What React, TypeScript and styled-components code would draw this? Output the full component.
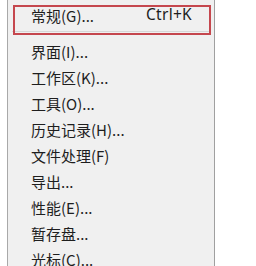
import React from "react";
import styled, { createGlobalStyle } from "styled-components";

const Global = createGlobalStyle`
  html, body { margin: 0; padding: 0; background: #ffffff; }
  body { font-family: "Noto Sans CJK SC", "Noto Sans", sans-serif; }
`;

const Page = styled.div`
  width: 256px;
  height: 266px;
  overflow: hidden;
  position: relative;
  background: #ffffff;
`;

const Menu = styled.div`
  position: relative;
  margin-left: 7px;
  width: 208px;
  height: 266px;
  box-sizing: border-box;
  background: #f0f0f0;
  border-left: 1px solid #a9a9a9;
  border-right: 1px solid #a0a0a0;
  padding-top: 2px;
  display: flex;
  flex-direction: column;
  overflow: hidden;
`;

const Item = styled.div`
  flex-shrink: 0;
  height: 26px;
  display: flex;
  align-items: center;
  justify-content: space-between;
  padding-left: 23px;
  padding-right: 22px;
  font-size: 15px;
  color: #1e1e1e;
  line-height: 1;
  white-space: nowrap;
`;

const Shortcut = styled.span`
  font-family: "Noto Sans", sans-serif;
  font-size: 15.5px;
  letter-spacing: 0.3px;
`;

const Separator = styled.div`
  flex-shrink: 0;
  height: 1px;
  margin: 3px 4px 6px 4px;
  background: #d7d7d7;
`;

const Highlight = styled.div`
  position: absolute;
  left: 5px;
  top: 5px;
  width: 198px;
  height: 30px;
  box-sizing: border-box;
  border: 2px solid #c5474e;
  pointer-events: none;
`;

const items = [
  "界面(I)...",
  "工作区(K)...",
  "工具(O)...",
  "历史记录(H)...",
  "文件处理(F)",
  "导出...",
  "性能(E)...",
  "暂存盘...",
  "光标(C)...",
];

export default function App() {
  return (
    <Page>
      <Global />
      <Menu>
        <Item>
          <span>常规(G)...</span>
          <Shortcut>Ctrl+K</Shortcut>
        </Item>
        <Separator />
        {items.map((t) => (
          <Item key={t}>
            <span>{t}</span>
          </Item>
        ))}
        <Highlight />
      </Menu>
    </Page>
  );
}
